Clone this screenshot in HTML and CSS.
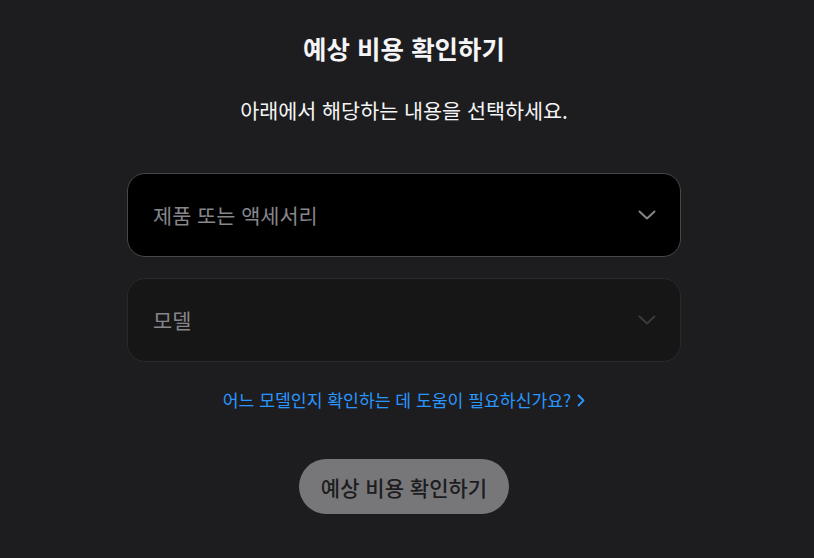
FILE: index.html
```html
<!DOCTYPE html>
<html lang="ko">
<head>
    <meta charset="UTF-8">
    <meta name="viewport" content="width=device-width, initial-scale=1.0">
    <title>예상 비용 확인하기</title>
    <link rel="stylesheet" href="styles.css">
</head>
<body>
    <div class="container">
        <h1>예상 비용 확인하기</h1>
        <p class="intro">아래에서 해당하는 내용을 선택하세요.</p>

        <div class="field active">
            <span>제품 또는 액세서리</span>
            <svg class="chevron" width="18" height="10" viewBox="0 0 18 10"><path d="M1.5 1.5 L9 8.5 L16.5 1.5" fill="none" stroke="currentColor" stroke-width="2" stroke-linecap="round" stroke-linejoin="round"/></svg>
        </div>

        <div class="field disabled">
            <span>모델</span>
            <svg class="chevron" width="18" height="10" viewBox="0 0 18 10"><path d="M1.5 1.5 L9 8.5 L16.5 1.5" fill="none" stroke="currentColor" stroke-width="2" stroke-linecap="round" stroke-linejoin="round"/></svg>
        </div>

        <a class="help" href="#">어느 모델인지 확인하는 데 도움이 필요하신가요?
            <svg width="8" height="13" viewBox="0 0 8 13"><path d="M1.5 1.5 L6.5 6.5 L1.5 11.5" fill="none" stroke="currentColor" stroke-width="1.8" stroke-linecap="round" stroke-linejoin="round"/></svg>
        </a>

        <button>예상 비용 확인하기</button>
    </div>
</body>
</html>
```

FILE: styles.css
```css
body {
    margin: 0;
    padding-right: 6px;
    background-color: #1d1d1f;
    color: #f5f5f7;
    font-family: "Noto Sans CJK KR", "Noto Sans", sans-serif;
}
.container {
    width: 554px;
    margin: 0 auto;
    padding-top: 30px;
    display: flex;
    flex-direction: column;
    align-items: center;
}
h1 {
    margin: 0;
    font-size: 25.5px;
    font-weight: 700;
    line-height: 36px;
}
.intro {
    margin: 29px 0 0 0;
    font-size: 20.7px;
    line-height: 30px;
}
.field {
    width: 100%;
    height: 84px;
    box-sizing: border-box;
    border-radius: 18px;
    padding: 0 24px 0 25px;
    display: flex;
    align-items: center;
    justify-content: space-between;
    font-size: 20.8px;
}
.field.active {
    margin-top: 48px;
    background-color: #000;
    border: 1px solid #48484a;
    color: #86868b;
}
.field.active .chevron {
    color: #86868b;
}
.field.disabled {
    margin-top: 21px;
    background-color: #161617;
    border: 1px solid #2a2a2c;
    color: #86868b;
}
.field.disabled .chevron {
    color: #3a3a3c;
}
.help {
    margin-top: 26px;
    color: #2997ff;
    text-decoration: none;
    font-size: 17.2px;
    line-height: 24px;
    display: flex;
    align-items: center;
    gap: 6px;
}
button {
    margin-top: 47px;
    width: 210px;
    height: 55px;
    border: none;
    border-radius: 28px;
    background-color: #77777a;
    color: #1d1d1f;
    font-family: inherit;
    font-weight: 500;
    font-size: 21px;
}
```
